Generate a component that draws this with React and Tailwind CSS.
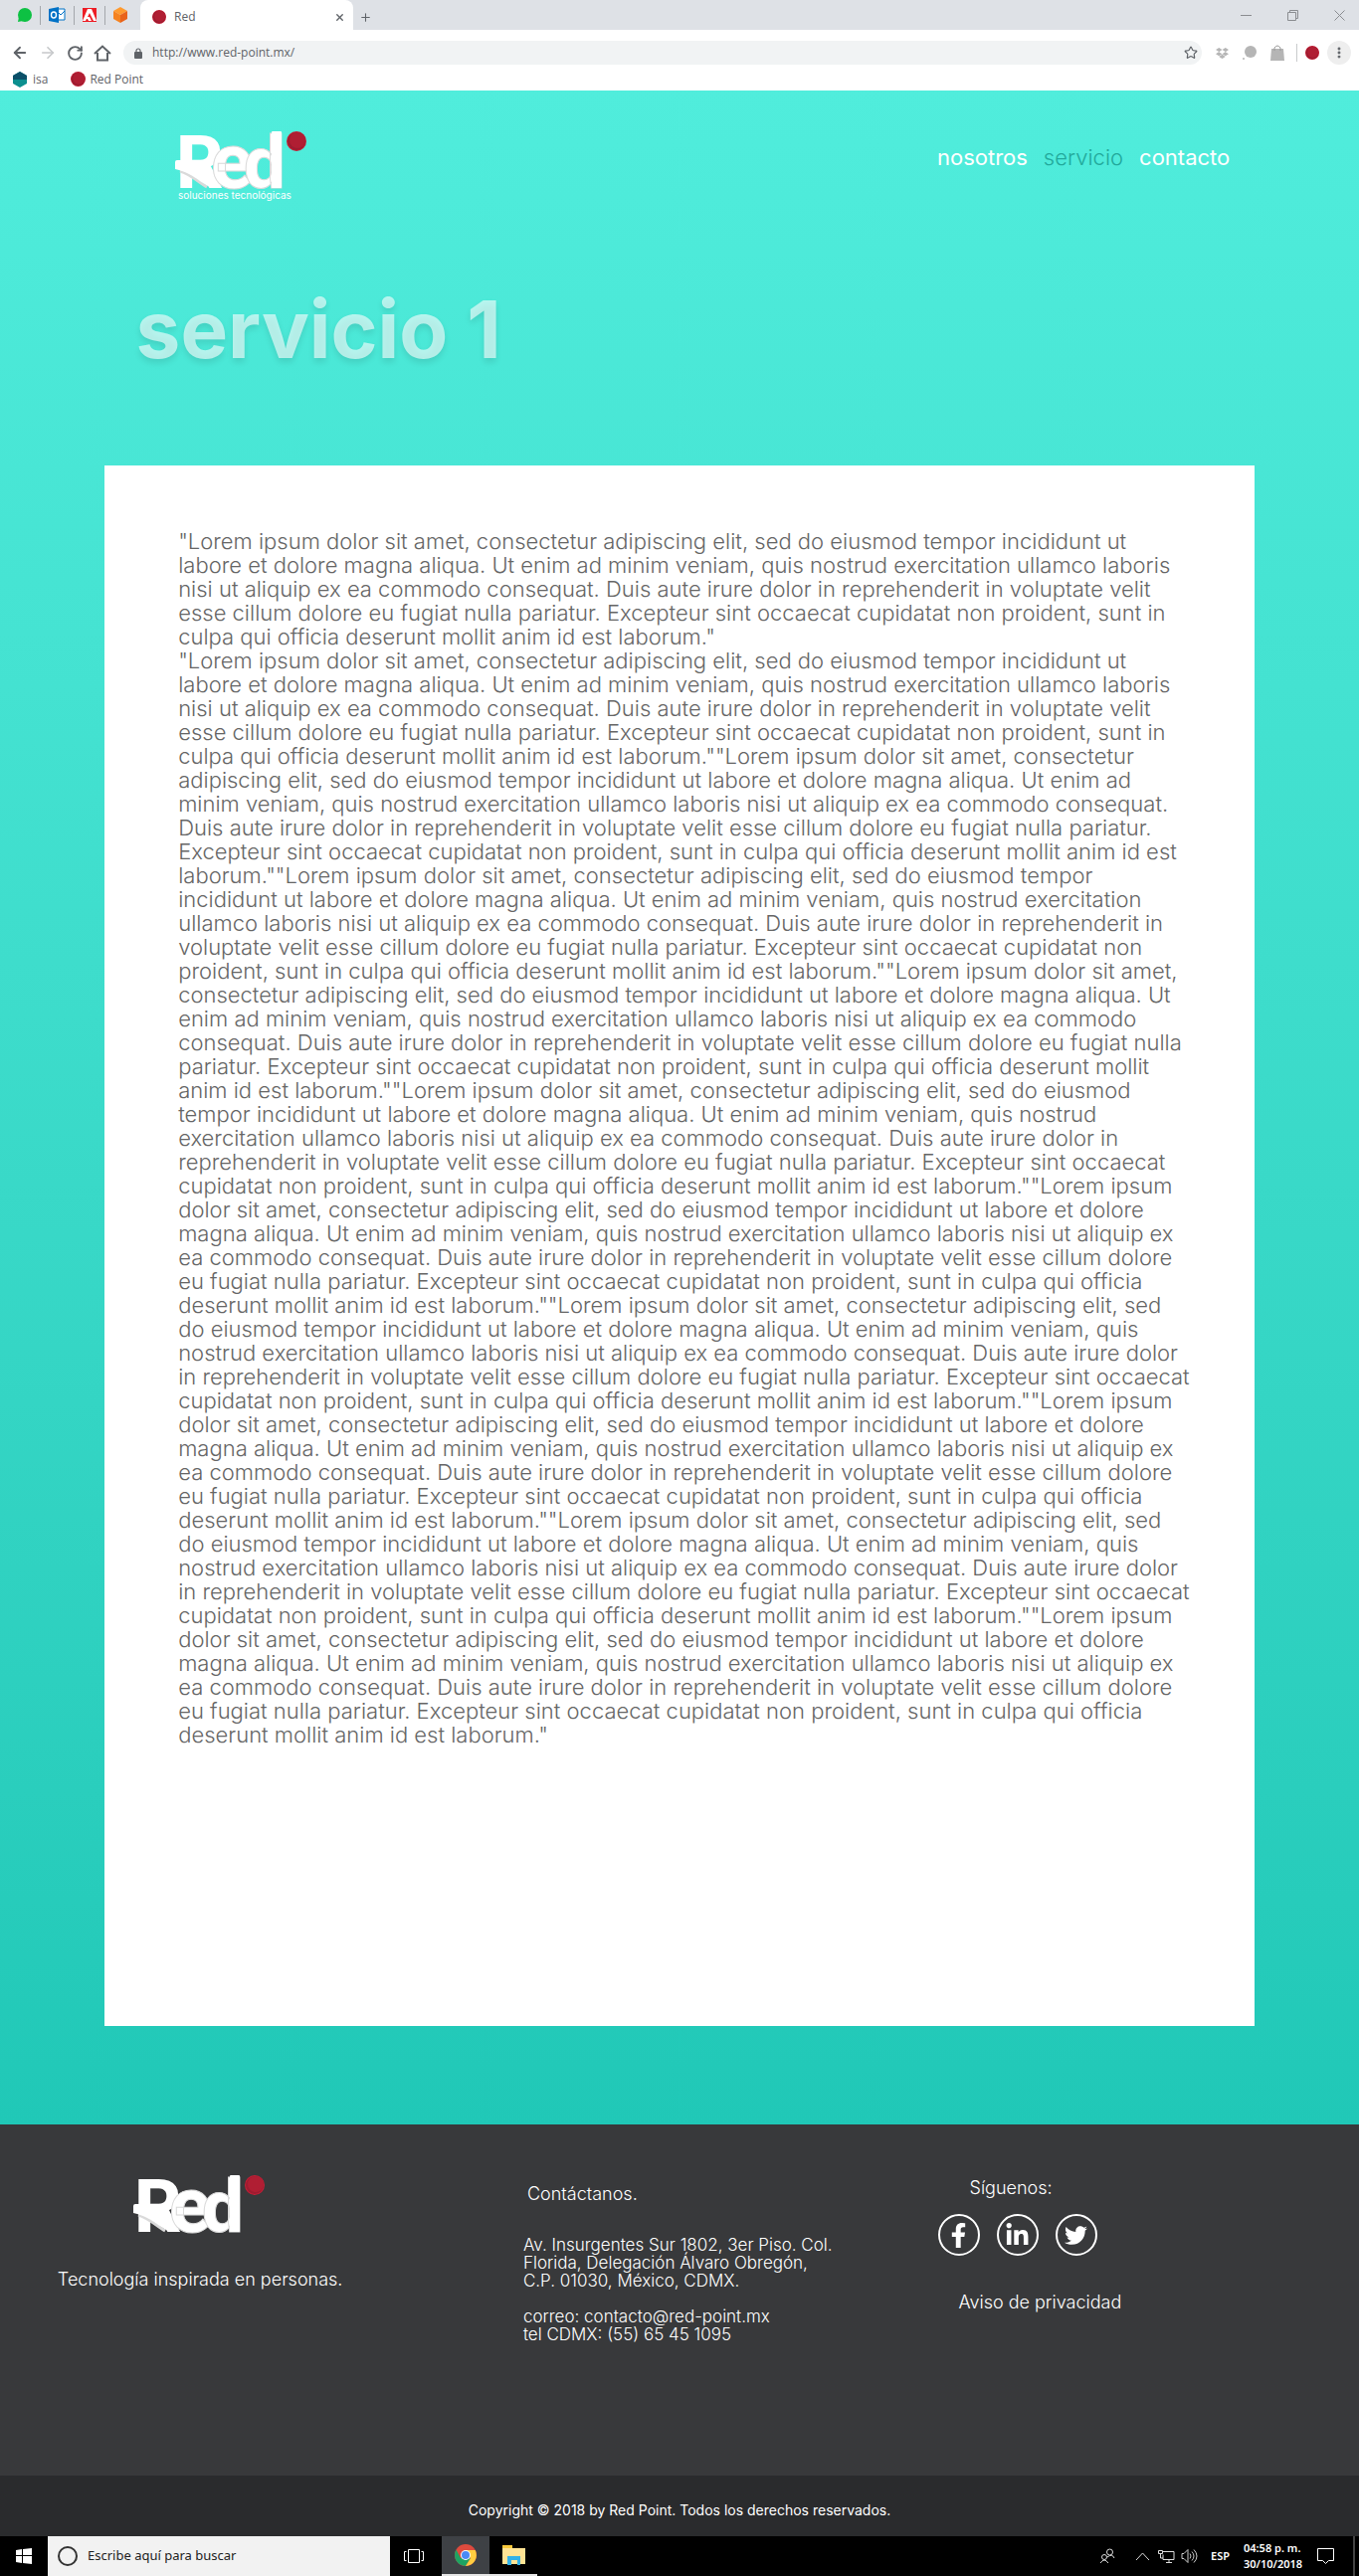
import React from "react";
import {
  ArrowLeft, ArrowRight, RotateCw, Star, X, Plus, MoreVertical,
} from "lucide-react";
import { FaFacebookF, FaLinkedinIn, FaTwitter, FaDropbox } from "react-icons/fa";

const LINES = [
  "\"Lorem ipsum dolor sit amet, consectetur adipiscing elit, sed do eiusmod tempor incididunt ut",
  "labore et dolore magna aliqua. Ut enim ad minim veniam, quis nostrud exercitation ullamco laboris",
  "nisi ut aliquip ex ea commodo consequat. Duis aute irure dolor in reprehenderit in voluptate velit",
  "esse cillum dolore eu fugiat nulla pariatur. Excepteur sint occaecat cupidatat non proident, sunt in",
  "culpa qui officia deserunt mollit anim id est laborum.\"",
  "\"Lorem ipsum dolor sit amet, consectetur adipiscing elit, sed do eiusmod tempor incididunt ut",
  "labore et dolore magna aliqua. Ut enim ad minim veniam, quis nostrud exercitation ullamco laboris",
  "nisi ut aliquip ex ea commodo consequat. Duis aute irure dolor in reprehenderit in voluptate velit",
  "esse cillum dolore eu fugiat nulla pariatur. Excepteur sint occaecat cupidatat non proident, sunt in",
  "culpa qui officia deserunt mollit anim id est laborum.\"\"Lorem ipsum dolor sit amet, consectetur",
  "adipiscing elit, sed do eiusmod tempor incididunt ut labore et dolore magna aliqua. Ut enim ad",
  "minim veniam, quis nostrud exercitation ullamco laboris nisi ut aliquip ex ea commodo consequat.",
  "Duis aute irure dolor in reprehenderit in voluptate velit esse cillum dolore eu fugiat nulla pariatur.",
  "Excepteur sint occaecat cupidatat non proident, sunt in culpa qui officia deserunt mollit anim id est",
  "laborum.\"\"Lorem ipsum dolor sit amet, consectetur adipiscing elit, sed do eiusmod tempor",
  "incididunt ut labore et dolore magna aliqua. Ut enim ad minim veniam, quis nostrud exercitation",
  "ullamco laboris nisi ut aliquip ex ea commodo consequat. Duis aute irure dolor in reprehenderit in",
  "voluptate velit esse cillum dolore eu fugiat nulla pariatur. Excepteur sint occaecat cupidatat non",
  "proident, sunt in culpa qui officia deserunt mollit anim id est laborum.\"\"Lorem ipsum dolor sit amet,",
  "consectetur adipiscing elit, sed do eiusmod tempor incididunt ut labore et dolore magna aliqua. Ut",
  "enim ad minim veniam, quis nostrud exercitation ullamco laboris nisi ut aliquip ex ea commodo",
  "consequat. Duis aute irure dolor in reprehenderit in voluptate velit esse cillum dolore eu fugiat nulla",
  "pariatur. Excepteur sint occaecat cupidatat non proident, sunt in culpa qui officia deserunt mollit",
  "anim id est laborum.\"\"Lorem ipsum dolor sit amet, consectetur adipiscing elit, sed do eiusmod",
  "tempor incididunt ut labore et dolore magna aliqua. Ut enim ad minim veniam, quis nostrud",
  "exercitation ullamco laboris nisi ut aliquip ex ea commodo consequat. Duis aute irure dolor in",
  "reprehenderit in voluptate velit esse cillum dolore eu fugiat nulla pariatur. Excepteur sint occaecat",
  "cupidatat non proident, sunt in culpa qui officia deserunt mollit anim id est laborum.\"\"Lorem ipsum",
  "dolor sit amet, consectetur adipiscing elit, sed do eiusmod tempor incididunt ut labore et dolore",
  "magna aliqua. Ut enim ad minim veniam, quis nostrud exercitation ullamco laboris nisi ut aliquip ex",
  "ea commodo consequat. Duis aute irure dolor in reprehenderit in voluptate velit esse cillum dolore",
  "eu fugiat nulla pariatur. Excepteur sint occaecat cupidatat non proident, sunt in culpa qui officia",
  "deserunt mollit anim id est laborum.\"\"Lorem ipsum dolor sit amet, consectetur adipiscing elit, sed",
  "do eiusmod tempor incididunt ut labore et dolore magna aliqua. Ut enim ad minim veniam, quis",
  "nostrud exercitation ullamco laboris nisi ut aliquip ex ea commodo consequat. Duis aute irure dolor",
  "in reprehenderit in voluptate velit esse cillum dolore eu fugiat nulla pariatur. Excepteur sint occaecat",
  "cupidatat non proident, sunt in culpa qui officia deserunt mollit anim id est laborum.\"\"Lorem ipsum",
  "dolor sit amet, consectetur adipiscing elit, sed do eiusmod tempor incididunt ut labore et dolore",
  "magna aliqua. Ut enim ad minim veniam, quis nostrud exercitation ullamco laboris nisi ut aliquip ex",
  "ea commodo consequat. Duis aute irure dolor in reprehenderit in voluptate velit esse cillum dolore",
  "eu fugiat nulla pariatur. Excepteur sint occaecat cupidatat non proident, sunt in culpa qui officia",
  "deserunt mollit anim id est laborum.\"\"Lorem ipsum dolor sit amet, consectetur adipiscing elit, sed",
  "do eiusmod tempor incididunt ut labore et dolore magna aliqua. Ut enim ad minim veniam, quis",
  "nostrud exercitation ullamco laboris nisi ut aliquip ex ea commodo consequat. Duis aute irure dolor",
  "in reprehenderit in voluptate velit esse cillum dolore eu fugiat nulla pariatur. Excepteur sint occaecat",
  "cupidatat non proident, sunt in culpa qui officia deserunt mollit anim id est laborum.\"\"Lorem ipsum",
  "dolor sit amet, consectetur adipiscing elit, sed do eiusmod tempor incididunt ut labore et dolore",
  "magna aliqua. Ut enim ad minim veniam, quis nostrud exercitation ullamco laboris nisi ut aliquip ex",
  "ea commodo consequat. Duis aute irure dolor in reprehenderit in voluptate velit esse cillum dolore",
  "eu fugiat nulla pariatur. Excepteur sint occaecat cupidatat non proident, sunt in culpa qui officia",
  "deserunt mollit anim id est laborum.\"",
];

function RedDot({ size }) {
  return (
    <svg width={size} height={size} viewBox="0 0 20 20" aria-hidden="true">
      <circle cx="10" cy="10" r="10" fill="#c41f36" />
      <circle cx="10" cy="10" r="9" fill="#9d1c30" />
      <circle cx="11" cy="9" r="8" fill="#b01e33" />
    </svg>
  );
}

function Logo({ tagline }) {
  return (
    <svg width="134" height="92" viewBox="0 -16 134 92" role="img" aria-label="Red">
      <text y="57" fontSize="74" fontFamily="Roboto, sans-serif" fontWeight="800" fill="#fff">
        <tspan x="1">R</tspan>
        <tspan x="36" fontSize="78" stroke="#dadada" strokeWidth="1">e</tspan>
        <tspan x="69" stroke="#dadada" strokeWidth="1">d</tspan>
      </text>
      <path d="M5 40 C16 43 23 51 32 56" fill="none" stroke="#dadada" strokeWidth="3" />
      <path d="M2 29 H25 L27 40 C31 45 35 49 39 53 Q42 57 46 57 H41 C29 57 22 43 0 38 V31 Q0 29 2 29Z" fill="#fff" />
      <rect x="97" y="0" width="10" height="57" rx="1" fill="#fff" />
      <circle cx="122" cy="10" r="10" fill="#c41f36" />
      <circle cx="122" cy="10" r="9" fill="#9d1c30" />
      <circle cx="123" cy="9" r="8" fill="#b01e33" />
      {tagline && (
        <text x="3" y="68" fontSize="10" fontFamily="Inter, sans-serif" fill="#fff">soluciones tecnológicas</text>
      )}
    </svg>
  );
}

function Browser() {
  return (
    <div className="bg-white font-['Open_Sans',sans-serif] text-xs text-[#5f6368]">
      <div className="flex h-[30px] items-center bg-[#dee1e6]">
        <div className="flex w-[141px] shrink-0 items-center gap-2 pl-[18px]">
          <svg width="14" height="14" viewBox="0 0 14 14"><circle cx="7" cy="7" r="7" fill="#0dc143" /><path d="M0 14 1 9 5 13Z" fill="#0dc143" /></svg>
          <i className="h-[19px] w-px bg-[#a4a7ab]" />
          <svg width="17" height="16" viewBox="0 0 17 16"><path d="M8 2h8v11H8Z" fill="#fff" stroke="#0072c6" /><path d="m9 5 3 3 4-4" fill="none" stroke="#0072c6" /><path d="m0 2 10-2v16L0 14Z" fill="#0072c6" /><ellipse cx="5" cy="8" rx="2.5" ry="3" fill="none" stroke="#fff" strokeWidth="1.4" /></svg>
          <i className="h-[19px] w-px bg-[#a4a7ab]" />
          <svg width="14" height="14" viewBox="0 0 14 14"><path fill="#ed1c24" d="M0 0h14v14H0Z" /><path fill="#fff" d="M0 13 5 1h4l5 12h-3L7 5 5 9h2l2 4H6l-1-2H4l-1 2Z" /></svg>
          <i className="h-[19px] w-px bg-[#a4a7ab]" />
          <svg width="14" height="16" viewBox="0 0 14 16"><path d="m7 0 7 4-7 4-7-4Z" fill="#ff9a2e" /><path d="m0 4 7 4v8l-7-4Z" fill="#f5821f" /><path d="m14 4-7 4v8l7-4Z" fill="#e9631a" /></svg>
        </div>
        <div className="flex h-[30px] w-[214px] items-center rounded-t-lg bg-white pt-1 pr-2 pl-3">
          <RedDot size={14} />
          <span className="ml-2 flex-1">Red</span>
          <button aria-label="Cerrar pestaña"><X size={11} strokeWidth={3} /></button>
        </div>
        <button aria-label="Nueva pestaña" className="ml-1.5 pt-1"><Plus size={13} strokeWidth={2} /></button>
        <div className="ml-auto flex items-center gap-9 pr-3.5 text-[#8b8d91]">
          <button aria-label="Minimizar"><svg width="11" height="10"><path d="M0 5.5h11" stroke="currentColor" /></svg></button>
          <button aria-label="Restaurar"><svg width="11" height="11" fill="none" stroke="currentColor"><path d="M.5 2.5h8v8h-8ZM2.5 2.5v-2h8v8h-2" /></svg></button>
          <button aria-label="Cerrar"><svg width="11" height="11" stroke="currentColor"><path d="m.5.5 10 10m0-10-10 10" /></svg></button>
        </div>
      </div>
      <div className="flex h-[46px] items-center pr-2 pl-[11px]">
        <button aria-label="Atrás"><ArrowLeft size={18} strokeWidth={2.5} /></button>
        <button aria-label="Adelante" className="ml-2.5 text-[#c6c8ca]"><ArrowRight size={18} strokeWidth={2.2} /></button>
        <button aria-label="Recargar" className="ml-2.5"><RotateCw size={17} strokeWidth={2.7} /></button>
        <button aria-label="Inicio" className="ml-2.5"><svg width="18" height="17" viewBox="0 0 18 17" fill="none" stroke="currentColor" strokeWidth="2"><path d="M1 9 9 1.5 17 9M4 8v7.500h10V8" /></svg></button>
        <div className="ml-3 flex h-6 flex-1 items-center rounded-full bg-[#f1f3f4] pr-1 pl-[11px]">
          <svg width="8" height="11" viewBox="0 0 8 11" className="shrink-0"><rect y="4" width="8" height="7" rx="1" fill="currentColor" /><path d="M2 5V3a2 2 0 0 1 4 0v2" fill="none" stroke="currentColor" strokeWidth="1.2" /></svg>
          <input aria-label="Dirección" defaultValue="http://www.red-point.mx/" className="ml-2.5 min-w-0 flex-1 bg-transparent outline-none" />
          <button aria-label="Favorito"><Star size={14} /></button>
        </div>
        <div className="ml-3.5 flex items-center text-[#b5b5b5]">
          <FaDropbox size={13} />
          <svg className="ml-3.5" width="14" height="14" viewBox="0 0 14 14" fill="currentColor"><circle cx="8" cy="6" r="6" /><circle cx="1" cy="13" r="1" /></svg>
          <svg className="ml-3.5" width="14" height="16" viewBox="0 0 14 16"><path d="M1 4h12l1 12H0Z" fill="currentColor" /><path d="M4 6V3q3-4 6 0v3" fill="none" stroke="#999" /></svg>
          <i className="mr-2 ml-3 h-[18px] w-px bg-[#c9cbcd]" />
          <RedDot size={14} />
          <button aria-label="Menú" className="ml-2 flex h-6 w-6 items-center justify-center rounded-full bg-[#eee] text-[#5f6368]"><MoreVertical size={14} strokeWidth={3} /></button>
        </div>
      </div>
      <div className="flex h-[15px] items-start pl-[13px] leading-none">
        <a href="#isa" className="-mt-1 flex items-center gap-1.5"><svg width="14" height="16" viewBox="0 0 14 16"><path d="m7 0 7 4v8l-7 4-7-4V4Z" fill="#0c8f8f" /><path d="m7 0 7 4v4H0V4Z" fill="#0b4f68" /></svg>isa</a>
        <a href="#red-point" className="-mt-1 ml-[23px] flex items-center gap-1"><RedDot size={15} />Red Point</a>
      </div>
    </div>
  );
}

function Social({ label, children }) {
  return (
    <a href={"#" + label} aria-label={label} className="flex h-[42px] w-[42px] items-center justify-center rounded-full border-2 border-white">
      {children}
    </a>
  );
}

function Taskbar() {
  return (
    <div className="flex h-10 items-stretch bg-black font-['Noto_Sans',sans-serif] text-white">
      <button aria-label="Inicio de Windows" className="flex w-12 items-center justify-center">
        <svg width="16" height="16" viewBox="0 0 16 16" fill="#fff"><path d="m0 2 6-1v6H0ZM7 1l9-1v7H7ZM0 8h6v7l-6-1ZM7 8h9v8l-9-1Z" /></svg>
      </button>
      <div className="flex w-[344px] items-center bg-[#f2f2f2] pl-2.5 text-[#222]">
        <svg width="20" height="21" viewBox="0 0 20 21" className="shrink-0"><circle cx="10" cy="10" r="9" fill="none" stroke="#333" strokeWidth="2" /></svg>
        <input aria-label="Buscar" placeholder="Escribe aquí para buscar" className="ml-2.5 w-full bg-transparent text-[13px] outline-none placeholder:text-[#222]" />
      </div>
      <button aria-label="Vista de tareas" className="flex w-12 items-center justify-center">
        <svg width="20" height="16" fill="none" stroke="#fff"><path d="M4.500 1.500h11v13h-11ZM2.500 3.500h-2v9h2m15-9h2v9h-2" /></svg>
      </button>
      <button aria-label="Chrome" className="ml-1 flex w-12 items-center justify-center border-b-2 border-[#e5e5e5] bg-[#3e4145]">
        <svg width="22" height="22" viewBox="0 0 22 22"><circle cx="11" cy="11" r="11" fill="#dd4b3e" /><path d="M1.500 5.500A11 11 0 0 0 11 22l5-8-10 0Z" fill="#1da362" /><path d="M20.700 6H11l5 8-5 8A11 11 0 0 0 20.700 6Z" fill="#ffcd40" /><circle cx="11" cy="11" r="5" fill="#fff" /><circle cx="11" cy="11" r="4" fill="#4a8af5" /></svg>
      </button>
      <button aria-label="Explorador" className="flex w-12 items-center justify-center border-b-2 border-[#e5e5e5]">
        <svg width="23" height="20" viewBox="0 0 23 20"><path d="M0 0h10v4H0Z" fill="#f9c93c" /><path d="M0 3h23v16H0Z" fill="#ffe394" /><path d="M5 11h13v9h-3v-5H9v5H5Z" fill="#33b1e8" /></svg>
      </button>
      <div className="ml-auto flex items-center">
        <svg width="16" height="16" viewBox="0 0 16 16" fill="none" stroke="#ddd"><circle cx="10.500" cy="4" r="3" /><path d="M8 9q5-4 7 1" /><circle cx="5" cy="9" r="2.500" /><path d="M1 15q4-6 8 0" /></svg>
        <svg className="ml-5" width="15" height="9" viewBox="0 0 15 9" fill="none" stroke="#ddd"><path d="m1 8 6.500-7L14 8" /></svg>
        <svg className="ml-2" width="17" height="15" viewBox="0 0 17 15" fill="none" stroke="#ddd"><path d="M5 2.500h11v8H5v-5M8 13.500h6m-3-3v3M.5 1.500h4v3h-4ZM2.500 5v4H5" /></svg>
        <svg className="ml-1.5" width="18" height="16" viewBox="0 0 18 16" fill="none" stroke="#ccc"><path d="M1 5.500h2l4-4v13l-4-4H1ZM9 5.500q2 2.500 0 5m2-7q4 4.500 0 9m2-11q6 6.500 0 13" /></svg>
        <span className="ml-3 text-[11px] font-semibold">ESP</span>
        <span className="ml-3.5 w-[66px] text-[11px] leading-4 font-semibold whitespace-nowrap">04:58 p. m.<br />30/10/2018</span>
        <svg className="ml-2" width="17" height="16" viewBox="0 0 17 16" fill="none" stroke="#fff"><path d="M.5.500h16v12h-5l-3 3-3-3h-5Z" /></svg>
        <i className="ml-[19px] h-10 w-0.5 bg-[#444]" />
        <i className="w-1" />
      </div>
    </div>
  );
}

export default function App() {
  return (
    <div className="font-[Inter,sans-serif]">
      <Browser />
      <main className="bg-linear-to-b from-[#50eddc] to-[#20c8b7] pb-[99px]">
        <header className="flex items-start justify-between pt-[25px] pr-[9.5%] pl-[12.9%]">
          <Logo tagline />
          <nav className="flex gap-4 pt-7 text-[22px] leading-7 text-white">
            <a href="#nosotros">nosotros</a>
            <a href="#servicio" className="font-light text-[#22a99b]">servicio</a>
            <a href="#contacto">contacto</a>
          </nav>
        </header>
        <h1 className="mt-[71px] pl-[10%] text-[80px] leading-[104px] font-bold text-white/60 [text-shadow:0_4px_6px_rgba(0,0,0,0.1)]">servicio 1</h1>
        <section className="mx-[7.7%] mt-[85px] bg-white pt-16 pb-[281px] pl-[74px]">
          <p className="text-[22px] leading-6 font-light whitespace-nowrap text-[#666]">
            {LINES.map((line, i) => (
              <span key={i} className="block">{line}</span>
            ))}
          </p>
        </section>
      </main>
      <footer className="bg-[#38393b] text-[18px] leading-[18px] font-light text-white">
        <div className="grid min-h-[353px] grid-cols-[38.5%_30.5%_1fr] items-start">
          <div className="pt-[35px] pl-[11%]">
            <div className="pl-[76px]"><Logo /></div>
            <p className="mt-5">Tecnología inspirada en personas.</p>
          </div>
          <div className="pt-[61px]">
            <h2 className="pl-1">Contáctanos.</h2>
            <address className="mt-[33px] text-[17px] leading-[18px] whitespace-nowrap not-italic">
              Av. Insurgentes Sur 1802, 3er Piso. Col.<br />
              Florida, Delegación Álvaro Obregón,<br />
              C.P. 01030, México, CDMX.<br /><br />
              correo: contacto@red-point.mx<br />
              tel CDMX: (55) 65 45 1095
            </address>
          </div>
          <div className="pt-[55px]">
            <h2 className="pl-8">Síguenos:</h2>
            <div className="mt-[17px] flex gap-[17px]">
              <Social label="Facebook"><FaFacebookF size={25} /></Social>
              <Social label="LinkedIn"><FaLinkedinIn size={25} /></Social>
              <Social label="Twitter"><FaTwitter size={23} /></Social>
            </div>
            <a href="#aviso" className="mt-[38px] block pl-[21px]">Aviso de privacidad</a>
          </div>
        </div>
        <p className="bg-[#2a2b2d] pt-[26px] pb-[17px] text-center text-[14px] leading-[18px] font-normal">Copyright © 2018 by Red Point. Todos los derechos reservados.</p>
      </footer>
      <Taskbar />
    </div>
  );
}
